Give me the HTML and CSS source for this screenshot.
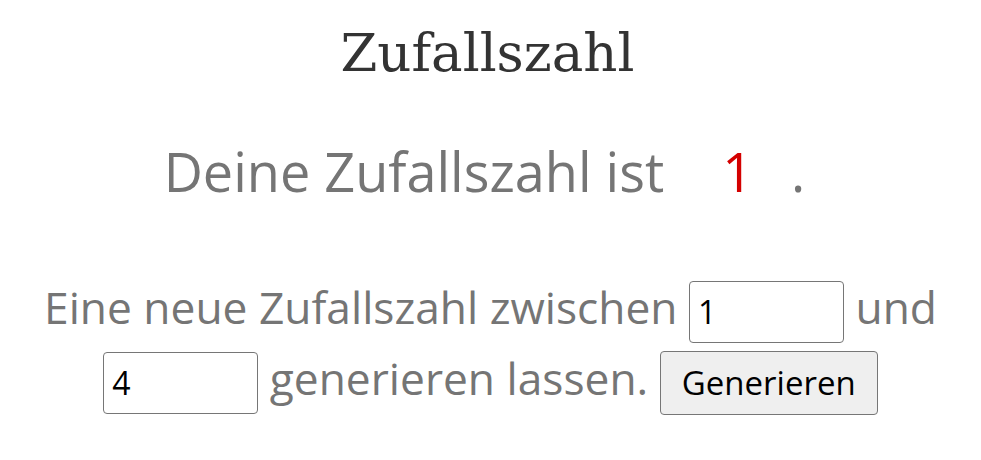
FILE: index.html
```html
<!DOCTYPE html>
<html lang="de">
<head>
<meta charset="utf-8">
<title>Zufallszahl</title>
<link rel="stylesheet" href="styles.css">
</head>
<body>
<main class="page">
  <h1 class="title">Zufallszahl</h1>
  <p class="result">Deine Zufallszahl ist <span class="number">1</span>.</p>
  <form class="gen">
    Eine neue Zufallszahl zwischen <input class="field" type="text" value="1"> und<br>
    <input class="field" type="text" value="4"> generieren lassen. <button class="btn" type="button">Generieren</button>
  </form>
</main>
</body>
</html>
```

FILE: styles.css
```css
html, body {
  margin: 0;
  padding: 0;
  background: #fff;
}
.page {
  text-align: center;
  font-family: "Open Sans", "Noto Sans", sans-serif;
  color: #757575;
}
.title {
  margin: 0;
  padding: 18px 6px 0 0;
  font-family: "DejaVu Serif", serif;
  font-weight: normal;
  font-size: 53px;
  line-height: 70px;
  color: #333;
}
.result {
  margin: 48px 0 0;
  padding-right: 12px;
  font-size: 54px;
  line-height: 70px;
}
.number {
  color: #d40000;
  padding: 0 38px 0 44px;
}
.gen {
  margin: 66px 0 0;
  font-size: 44.3px;
  line-height: 71px;
}
.field {
  box-sizing: border-box;
  width: 155px;
  height: 62px;
  font-family: "Open Sans", sans-serif;
  font-size: 32px;
  color: #000;
  padding: 0 8px;
  border: 1px solid #767676;
  border-radius: 4px;
  vertical-align: baseline;
}
.btn {
  box-sizing: border-box;
  width: 218px;
  height: 64px;
  font-family: "Open Sans", sans-serif;
  font-size: 33px;
  color: #000;
  background: #efefef;
  border: 1px solid #767676;
  border-radius: 4px;
  padding: 0;
}
```
